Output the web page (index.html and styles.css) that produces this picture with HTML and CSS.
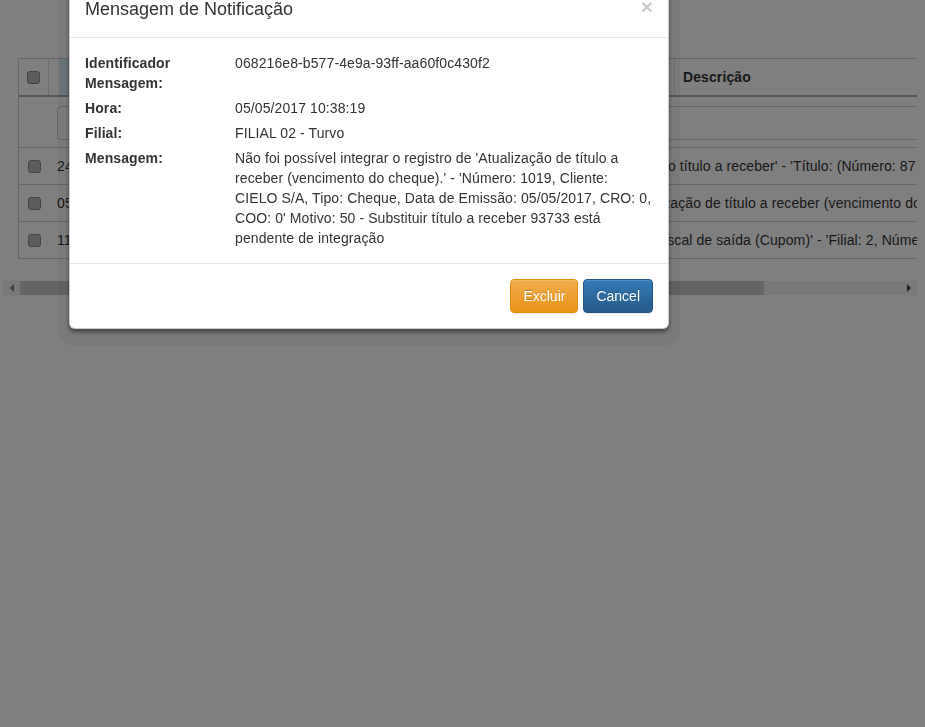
FILE: index.html
```html
<!DOCTYPE html>
<html lang="pt-BR">
<head>
    <meta charset="UTF-8">
    <meta name="viewport" content="width=device-width, initial-scale=1.0">
    <title>Mensagens de Integração</title>
    <link rel="stylesheet" href="styles.css">
</head>
<body>
    <div class="page">
        <div class="grid">
            <div class="grid-head">
                <div class="cell check"><span class="box"></span></div>
                <div class="cell"></div>
                <div class="cell sorted"></div>
                <div class="cell">Filial</div>
                <div class="cell desc">Descrição</div>
            </div>
            <div class="grid-filter">
                <input class="filter-input" type="text">
            </div>
            <div class="grid-row">
                <div class="cell check"><span class="box"></span></div>
                <div class="cell">24/04/2017 09:12:41 &nbsp; FILIAL 01 - Centro</div>
                <div class="cell">do título a receber' - 'Título: (Número: 8712, Parcela: 1, Cliente: MARIA APARECIDA)'</div>
            </div>
            <div class="grid-row">
                <div class="cell check"><span class="box"></span></div>
                <div class="cell">05/05/2017 10:38:19 &nbsp; FILIAL 02 - Turvo</div>
                <div class="cell">ização de título a receber (vencimento do cheque).' - 'Número: 1019, Cliente: CIELO S/A'</div>
            </div>
            <div class="grid-row">
                <div class="cell check"><span class="box"></span></div>
                <div class="cell">11/05/2017 16:02:55 &nbsp; FILIAL 02 - Turvo</div>
                <div class="cell">fiscal de saída (Cupom)' - 'Filial: 2, Número: 48211, Série: 1'</div>
            </div>
        </div>

        <div class="hscroll">
            <div class="hscroll-btn"><span class="arrow-left"></span></div>
            <div class="hscroll-thumb"></div>
            <div class="hscroll-track"></div>
            <div class="hscroll-btn"><span class="arrow-right"></span></div>
        </div>
    </div>

    <div class="backdrop"></div>

    <div class="modal">
        <div class="modal-header">
            <span class="close">&times;</span>
            <h4 class="modal-title">Mensagem de Notificação</h4>
        </div>
        <div class="modal-body">
            <div class="detail">
                <div class="label">Identificador Mensagem:</div>
                <div class="value">068216e8-b577-4e9a-93ff-aa60f0c430f2</div>

                <div class="label">Hora:</div>
                <div class="value">05/05/2017 10:38:19</div>

                <div class="label">Filial:</div>
                <div class="value">FILIAL 02 - Turvo</div>

                <div class="label">Mensagem:</div>
                <div class="value">Não foi possível integrar o registro de 'Atualização de título a receber (vencimento do cheque).' - 'Número: 1019, Cliente: CIELO S/A, Tipo: Cheque, Data de Emissão: 05/05/2017, CRO: 0, COO: 0' Motivo: 50 - Substituir título a receber 93733 está pendente de integração</div>
            </div>
        </div>
        <div class="modal-footer">
            <button class="btn btn-warning">Excluir</button><button class="btn btn-primary">Cancel</button>
        </div>
    </div>
</body>
</html>
```

FILE: styles.css
```css
body {
    margin: 0;
    background: #fff;
    font-family: "Liberation Sans", Arial, sans-serif;
    font-size: 14px;
    line-height: 20px;
    letter-spacing: 0.1px;
    color: #333;
}
.page {
    padding-top: 58px;
}

/* grid behind the modal */
.grid {
    margin-left: 18px;
    width: 898px;
    border-left: 1px solid #ccc;
    overflow: hidden;
}
.grid-head {
    display: grid;
    grid-template-columns: 30px 10px 150px 466px 1fr;
    height: 36px;
    border-top: 1px solid #ccc;
    border-bottom: 2px solid #aaa;
    font-weight: bold;
}
.grid-head .cell {
    border-right: 1px solid #ddd;
}
.grid-head .sorted {
    background: #d9edf7;
}
.grid-head .desc {
    border-right: none;
}
.cell {
    padding: 0 8px;
    line-height: 36px;
    white-space: nowrap;
    overflow: hidden;
}
.cell.check {
    padding: 0;
    display: flex;
    align-items: center;
    justify-content: center;
}
.box {
    width: 11px;
    height: 11px;
    background: #b8b8b8;
    border: 1px solid #8a8a8a;
    border-radius: 3px;
}
.grid-filter {
    height: 51px;
    border-bottom: 1px solid #ccc;
    padding: 9px 0 0 38px;
    box-sizing: border-box;
}
.filter-input {
    width: 900px;
    height: 34px;
    box-sizing: border-box;
    border: 1px solid #ccc;
    border-radius: 4px;
    background: #fff;
}
.grid-row {
    display: grid;
    grid-template-columns: 30px 603px 1fr;
    height: 36px;
    border-bottom: 1px solid #ccc;
}

/* horizontal scrollbar */
.hscroll {
    display: flex;
    margin: 22px 8px 0 3px;
    height: 14px;
    background: #f1f1f1;
}
.hscroll-btn {
    width: 17px;
    display: flex;
    align-items: center;
    justify-content: center;
}
.hscroll-thumb {
    width: 744px;
    background: #c8c8c8;
}
.hscroll-track {
    flex: 1;
}
.arrow-left,
.arrow-right {
    width: 0;
    height: 0;
    border-top: 4px solid transparent;
    border-bottom: 4px solid transparent;
}
.arrow-left {
    border-right: 4px solid #777;
}
.arrow-right {
    border-left: 4px solid #444;
}

/* modal */
.backdrop {
    position: fixed;
    top: 0;
    left: 0;
    right: 0;
    bottom: 0;
    background: rgba(0, 0, 0, 0.5);
}
.modal {
    position: absolute;
    top: -20px;
    left: 69px;
    width: 600px;
    box-sizing: border-box;
    background: #fff;
    border: 1px solid rgba(0, 0, 0, 0.2);
    border-radius: 6px;
    box-shadow: 0 3px 4px rgba(0, 0, 0, 0.45), 0 6px 0 11px rgba(0, 0, 0, 0.04);
}
.modal-header {
    padding: 15px;
    border-bottom: 1px solid #e5e5e5;
}
.modal-title {
    margin: 0;
    font-size: 18px;
    font-weight: normal;
    line-height: 26px;
    letter-spacing: 0;
}
.close {
    float: right;
    margin-top: 0;
    font-size: 21px;
    font-weight: bold;
    line-height: 1;
    color: #000;
    opacity: 0.2;
}
.modal-body {
    padding: 15px;
}
.detail {
    display: grid;
    grid-template-columns: 150px 1fr;
    row-gap: 5px;
}
.label {
    font-weight: bold;
    padding-right: 15px;
}
.modal-footer {
    padding: 15px;
    text-align: right;
    border-top: 1px solid #e5e5e5;
}
.btn {
    padding: 6px 12px;
    margin-left: 5px;
    font-family: inherit;
    font-size: 14px;
    line-height: 20px;
    letter-spacing: 0;
    color: #fff;
    border: 1px solid transparent;
    border-radius: 4px;
    text-shadow: 0 -1px 0 rgba(0, 0, 0, 0.2);
    box-shadow: inset 0 1px 0 rgba(255, 255, 255, 0.15), 0 1px 1px rgba(0, 0, 0, 0.075);
    cursor: pointer;
}
.btn-warning {
    background: linear-gradient(#f0ad4e, #eb9316);
    border-color: #e38d13;
}
.btn-primary {
    background: linear-gradient(#337ab7, #265a88);
    border-color: #245580;
}
```
